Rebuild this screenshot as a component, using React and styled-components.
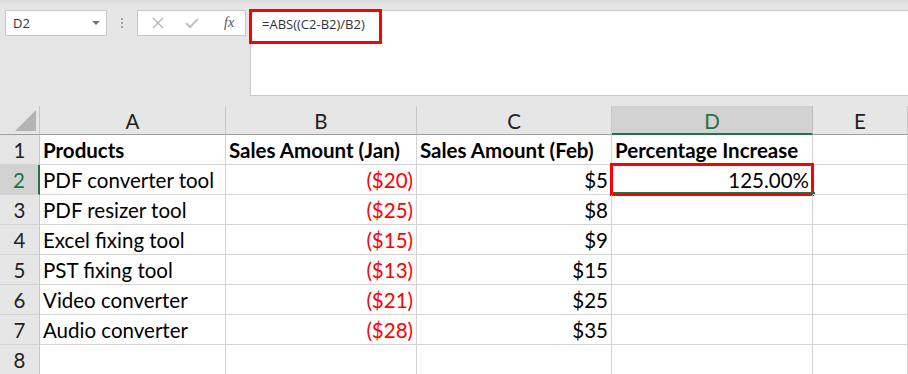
import styled, { createGlobalStyle } from 'styled-components'

const GlobalStyle = createGlobalStyle`
  html, body {
    margin: 0;
    padding: 0;
    background: #ffffff;
    overflow: hidden;
  }
`

const Page = styled.div`
  width: 908px;
  height: 374px;
  overflow: hidden;
  background: #ffffff;
`

const Toolbar = styled.div`
  height: 106px;
  box-sizing: border-box;
  background: linear-gradient(#d9d9d9 0, #e4e4e4 4px, #e6e6e6 10px);
  display: flex;
  align-items: flex-start;
  padding: 10px 0 0 5px;
  font-family: "Open Sans", "Noto Sans", sans-serif;
  font-size: 13px;
  color: #333;
`

const NameBox = styled.div`
  width: 102px;
  height: 26px;
  box-sizing: border-box;
  background: #fff;
  border: 1px solid #c6c6c6;
  display: flex;
  align-items: center;
  justify-content: space-between;
  padding: 0 6px 0 7px;
`

const Caret = styled.span`
  width: 0;
  height: 0;
  border-left: 4px solid transparent;
  border-right: 4px solid transparent;
  border-top: 4px solid #777;
`

const Dots = styled.div`
  width: 30px;
  height: 26px;
  display: flex;
  flex-direction: column;
  align-items: center;
  justify-content: center;
  gap: 2px;
  span {
    width: 2px;
    height: 2px;
    background: #a6a6a6;
  }
`

const ButtonBox = styled.div`
  width: 109px;
  height: 26px;
  box-sizing: border-box;
  background: #fff;
  border: 1px solid #c6c6c6;
  display: flex;
  align-items: center;
  padding: 0 0 0 14px;
  gap: 21px;
`

const Fx = styled.span`
  font-family: "Liberation Serif", serif;
  font-style: italic;
  font-size: 14px;
  color: #555;
  margin-left: 4px;
`

const FormulaBox = styled.div`
  position: relative;
  flex: 1;
  height: 86px;
  margin-left: 4px;
  box-sizing: border-box;
  background: #fff;
  border: 1px solid #c6c6c6;
  border-right: none;
  padding: 4px 0 0 11px;
  color: #333;
`

const Highlight = styled.div`
  position: absolute;
  left: -2px;
  top: -2px;
  width: 133px;
  height: 35px;
  box-sizing: border-box;
  border: 3px solid #ff0000;
  pointer-events: none;
`

const Grid = styled.div`
  display: grid;
  grid-template-columns: 40px 186px 191px 195px 201px 1fr;
  grid-template-rows: 29px repeat(8, 30px);
  font-family: Lato, "Open Sans", sans-serif;
  font-size: 20.5px;
  color: #000;
`

const Corner = styled.div`
  background: #e6e6e6;
  border-right: 1px solid #c8c8c8;
  border-bottom: 1px solid #9f9f9f;
  position: relative;
  &::after {
    content: "";
    position: absolute;
    right: 3px;
    bottom: 3px;
    width: 0;
    height: 0;
    border-left: 21px solid transparent;
    border-bottom: 21px solid #b4b4b4;
  }
`

const ColHead = styled.div`
  background: ${p => (p.$active ? '#d2d2d2' : '#e6e6e6')};
  color: ${p => (p.$active ? '#217346' : '#222')};
  border-right: 1px solid ${p => (p.$active ? '#bdbdbd' : '#c8c8c8')};
  border-bottom: ${p => (p.$active ? '2px solid #217346' : '1px solid #9f9f9f')};
  display: flex;
  align-items: center;
  justify-content: center;
  padding-top: 2px;
  box-sizing: border-box;
`

const RowHead = styled.div`
  background: ${p => (p.$active ? '#d2d2d2' : '#e6e6e6')};
  color: ${p => (p.$active ? '#217346' : '#222')};
  border-right: ${p => (p.$active ? '2px solid #217346' : '1px solid #c8c8c8')};
  border-bottom: 1px solid #d4d4d4;
  display: flex;
  align-items: center;
  justify-content: center;
  box-sizing: border-box;
`

const Cell = styled.div`
  position: relative;
  border-right: 1px solid #d4d4d4;
  border-bottom: 1px solid #d4d4d4;
  display: flex;
  align-items: center;
  justify-content: ${p => (p.$right ? 'flex-end' : 'flex-start')};
  padding: 0 3px 0 3px;
  font-weight: ${p => (p.$bold ? 700 : 400)};
  color: ${p => (p.$red ? '#ff0000' : '#000')};
  white-space: nowrap;
  box-sizing: border-box;
`

const Selected = styled.div`
  position: absolute;
  left: -2px;
  right: -2px;
  top: -2px;
  bottom: -2px;
  border: 3px solid #ff0000;
  pointer-events: none;
  &::before {
    content: "";
    position: absolute;
    left: 0;
    right: 0;
    bottom: 0;
    height: 1px;
    background: #217346;
  }
  &::after {
    content: "";
    position: absolute;
    right: -4px;
    bottom: -2px;
    width: 3px;
    height: 3px;
    background: #217346;
  }
`

const data = [
  ['Products', 'Sales Amount (Jan)', 'Sales Amount (Feb)', 'Percentage Increase'],
  ['PDF converter tool', '($20)', '$5', '125.00%'],
  ['PDF resizer tool', '($25)', '$8', ''],
  ['Excel fixing tool', '($15)', '$9', ''],
  ['PST fixing tool', '($13)', '$15', ''],
  ['Video converter', '($21)', '$25', ''],
  ['Audio converter', '($28)', '$35', ''],
  ['', '', '', '']
]

function Cross() {
  return (
    <svg width="12" height="12" viewBox="0 0 12 12">
      <path d="M1 1 L11 11 M11 1 L1 11" stroke="#b3b3b3" strokeWidth="1.3" fill="none" />
    </svg>
  )
}

function Check() {
  return (
    <svg width="14" height="12" viewBox="0 0 14 12">
      <path d="M1 6 L5 10 L13 2" stroke="#c2c2c2" strokeWidth="2" fill="none" />
    </svg>
  )
}

export default function App() {
  return (
    <Page>
      <GlobalStyle />
      <Toolbar>
        <NameBox>
          <span>D2</span>
          <Caret />
        </NameBox>
        <Dots><span /><span /><span /></Dots>
        <ButtonBox>
          <Cross />
          <Check />
          <Fx>fx</Fx>
        </ButtonBox>
        <FormulaBox>
          =ABS((C2-B2)/B2)
          <Highlight />
        </FormulaBox>
      </Toolbar>
      <Grid>
        <Corner />
        {['A', 'B', 'C', 'D', 'E'].map(l => (
          <ColHead key={l} $active={l === 'D'}>{l}</ColHead>
        ))}
        {data.map((row, i) => (
          <Row key={i} n={i + 1} row={row} />
        ))}
      </Grid>
    </Page>
  )
}

function Row({ n, row }) {
  const bold = n === 1
  return (
    <>
      <RowHead $active={n === 2}>{n}</RowHead>
      <Cell $bold={bold}>{row[0]}</Cell>
      <Cell $bold={bold} $right={!bold} $red={!bold}>{row[1]}</Cell>
      <Cell $bold={bold} $right={!bold}>{row[2]}</Cell>
      <Cell $bold={bold} $right={!bold}>
        {row[3]}
        {n === 2 && <Selected />}
      </Cell>
      <Cell />
    </>
  )
}
